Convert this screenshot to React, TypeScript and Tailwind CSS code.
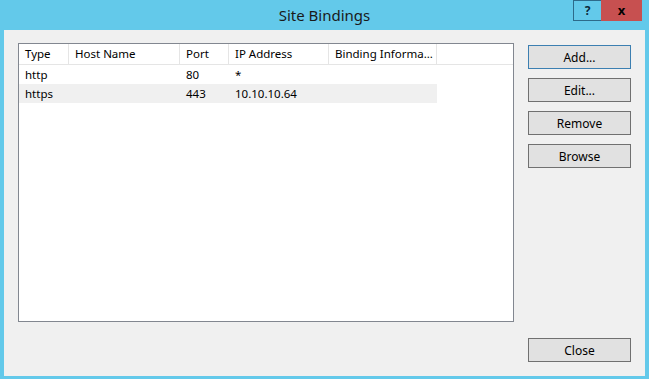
import React from 'react';

const cols = [
  { label: 'Type', w: 'w-[50px]' },
  { label: 'Host Name', w: 'w-[111px]' },
  { label: 'Port', w: 'w-[49px]' },
  { label: 'IP Address', w: 'w-[100px]' },
  { label: 'Binding Informa...', w: 'w-[108px]' },
];

const rows = [
  { type: 'http', host: '', port: '80', ip: '*', info: '', selected: false },
  { type: 'https', host: '', port: '443', ip: '10.10.10.64', info: '', selected: true },
];

const DlgButton: React.FC<{ label: string; primary?: boolean }> = ({ label, primary }) => (
  <button
    className={`h-[24px] w-[103px] border bg-[#e1e1e1] pt-[1px] text-[12px] leading-none text-[#000] ${
      primary ? 'border-[#3c7fb1]' : 'border-[#707070]'
    }`}
  >
    {label}
  </button>
);

export default function App() {
  return (
    <div className="flex h-[379px] w-[649px] flex-col bg-[#63c9ea] font-['Segoe_UI','Noto_Sans',sans-serif] text-[12px] text-black">
      {/* title bar */}
      <div className="relative flex h-[30px] items-center justify-center pt-[1px]">
        <span className="text-[15px] text-[#1a1a1a]">Site Bindings</span>
        <div className="absolute right-[7px] top-0 flex h-[21px]">
          <div className="flex w-[28px] items-center justify-center border border-[#2d6a8a] border-r-0 bg-[#63c9ea] text-[12px] font-bold text-[#0b2a3a]">
            ?
          </div>
          <div className="flex w-[41px] items-center justify-center bg-[#c75050] text-[13px] font-bold text-black">
            x
          </div>
        </div>
      </div>

      {/* client area */}
      <div className="mx-[4px] mb-[3px] flex flex-1 bg-[#f0f0f0] pl-[14px] pt-[13px]">
        <div className="h-[279px] w-[496px] border border-[#828790] bg-white text-[11.5px]">
          <div className="flex h-[21px] border-b border-[#e5e5e5]">
            {cols.map((c) => (
              <div
                key={c.label}
                className={`${c.w} flex items-center overflow-hidden whitespace-nowrap border-r border-[#e5e5e5] pl-[6px]`}
              >
                {c.label}
              </div>
            ))}
          </div>
          {rows.map((r) => (
            <div
              key={r.type}
              className={`flex h-[19px] w-[418px] items-center whitespace-nowrap ${r.selected ? 'bg-[#f0f0f0]' : ''}`}
            >
              <div className="w-[50px] pl-[6px]">{r.type}</div>
              <div className="w-[111px] pl-[6px]">{r.host}</div>
              <div className="w-[49px] pl-[6px]">{r.port}</div>
              <div className="w-[100px] pl-[6px]">{r.ip}</div>
              <div className="w-[108px] pl-[6px]">{r.info}</div>
            </div>
          ))}
        </div>

        <div className="ml-[14px] flex flex-col pb-[14px] pt-[2px]">
          <div className="flex flex-col gap-[9px]">
            <DlgButton label="Add..." primary />
            <DlgButton label="Edit..." />
            <DlgButton label="Remove" />
            <DlgButton label="Browse" />
          </div>
          <div className="mt-auto">
            <DlgButton label="Close" />
          </div>
        </div>
      </div>
    </div>
  );
}
